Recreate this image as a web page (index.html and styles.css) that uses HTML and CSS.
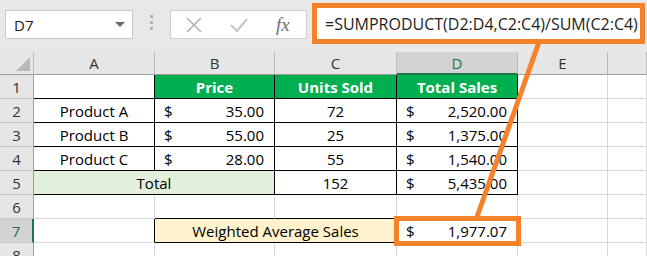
FILE: index.html
```html
<!DOCTYPE html>
<html>
<head>
<meta charset="utf-8">
<link rel="stylesheet" href="styles.css">
</head>
<body>
<div class="app">
  <div class="formula-bar">
    <div class="name-box">
      <span class="name-text">D7</span>
      <svg class="caret" width="10" height="6" viewBox="0 0 10 6"><polygon points="0,0 10,0 5,5" fill="#6b6b6b"/></svg>
    </div>
    <div class="grip"><span></span><span></span><span></span></div>
    <div class="fx-box">
      <svg class="icon-x" width="18" height="18" viewBox="0 0 18 18"><path d="M2 2 L16 16 M16 2 L2 16" stroke="#b3b3b3" stroke-width="1.6" fill="none"/></svg>
      <svg class="icon-check" width="20" height="16" viewBox="0 0 20 16"><path d="M2 8 L8 14 L18 2" stroke="#c4c4c4" stroke-width="2" fill="none"/></svg>
      <span class="fx">fx</span>
    </div>
    <div class="formula-input">=SUMPRODUCT(D2:D4,C2:C4)/SUM(C2:C4)</div>
  </div>

  <div class="grid">
    <div class="hd corner"><svg width="14" height="14" viewBox="0 0 14 14" class="corner-tri"><polygon points="14,0 14,14 0,14" fill="#b9b9b9"/></svg></div>
    <div class="hd col">A</div>
    <div class="hd col">B</div>
    <div class="hd col">C</div>
    <div class="hd col sel-col">D</div>
    <div class="hd col">E</div>
    <div class="hd col last"></div>

    <div class="hd row">1</div>
    <div class="c bk"></div>
    <div class="c bk green">Price</div>
    <div class="c bk green">Units Sold</div>
    <div class="c bk green">Total Sales</div>
    <div class="c"></div>
    <div class="c"></div>

    <div class="hd row">2</div>
    <div class="c bk center">Product A</div>
    <div class="c bk num"><span>$</span><span>35.00</span></div>
    <div class="c bk center">72</div>
    <div class="c bk num"><span>$</span><span>2,520.00</span></div>
    <div class="c"></div>
    <div class="c"></div>

    <div class="hd row">3</div>
    <div class="c bk center">Product B</div>
    <div class="c bk num"><span>$</span><span>55.00</span></div>
    <div class="c bk center">25</div>
    <div class="c bk num"><span>$</span><span>1,375.00</span></div>
    <div class="c"></div>
    <div class="c"></div>

    <div class="hd row">4</div>
    <div class="c bk center">Product C</div>
    <div class="c bk num"><span>$</span><span>28.00</span></div>
    <div class="c bk center">55</div>
    <div class="c bk num"><span>$</span><span>1,540.00</span></div>
    <div class="c"></div>
    <div class="c"></div>

    <div class="hd row">5</div>
    <div class="c bk center total span2">Total</div>
    <div class="c bk center">152</div>
    <div class="c bk num"><span>$</span><span>5,435.00</span></div>
    <div class="c"></div>
    <div class="c"></div>

    <div class="hd row">6</div>
    <div class="c"></div>
    <div class="c bb"></div>
    <div class="c bb"></div>
    <div class="c"></div>
    <div class="c"></div>
    <div class="c"></div>

    <div class="hd row sel-row">7</div>
    <div class="c br"></div>
    <div class="c bk center wavg span2">Weighted Average Sales</div>
    <div class="c num active"><span>$</span><span>1,977.07</span></div>
    <div class="c"></div>
    <div class="c"></div>

    <div class="hd row">8</div>
    <div class="c"></div>
    <div class="c"></div>
    <div class="c"></div>
    <div class="c"></div>
    <div class="c"></div>
    <div class="c"></div>
  </div>

  <svg class="callout" width="647" height="256" viewBox="0 0 647 256">
    <line x1="539" y1="42" x2="477" y2="217" stroke="#f5822a" stroke-width="5"/>
  </svg>
</div>
</body>
</html>
```

FILE: styles.css
```css
* { box-sizing: border-box; }
html, body { margin: 0; padding: 0; }
body {
  width: 647px;
  height: 256px;
  overflow: hidden;
  background: #ffffff;
  font-family: "Open Sans", "Noto Sans", sans-serif;
}
.app {
  position: relative;
  width: 647px;
  height: 256px;
  overflow: hidden;
}

/* formula bar */
.formula-bar {
  display: flex;
  align-items: flex-start;
  height: 52px;
  background: #e8e8e8;
  padding-left: 5px;
}
.name-box {
  margin-top: 10px;
  width: 128px;
  height: 29px;
  background: #fff;
  border: 1px solid #c8c8c8;
  display: flex;
  align-items: center;
  justify-content: space-between;
  padding: 0 7px 0 8px;
  font-family: "Open Sans", "Noto Sans", sans-serif;
  font-size: 15px;
  color: #222;
}
.grip {
  width: 37px;
  display: flex;
  flex-direction: column;
  align-items: center;
  gap: 3px;
  margin-top: 15px;
}
.grip span {
  width: 3px;
  height: 3px;
  background: #b3b3b3;
}
.fx-box {
  margin-top: 10px;
  width: 137px;
  height: 29px;
  background: #fff;
  border: 1px solid #d0d0d0;
  display: flex;
  align-items: center;
  padding-left: 14px;
}
.icon-check { margin-left: 26px; }
.fx {
  margin-left: 27px;
  font-family: "Liberation Serif", "DejaVu Serif", serif;
  font-style: italic;
  font-size: 19px;
  color: #707070;
  line-height: 1;
}
.formula-input {
  margin-top: 3px;
  margin-left: 5px;
  width: 333px;
  height: 41px;
  background: #fff;
  border: 5px solid #f5822a;
  display: flex;
  align-items: center;
  padding-left: 8px;
  font-family: "Open Sans", "Noto Sans", sans-serif;
  font-size: 16px;
  color: #1e1e1e;
  white-space: nowrap;
  overflow: hidden;
}

/* grid */
.grid {
  display: grid;
  grid-template-columns: 34px 121px 120px 122px 121px 90px 39px;
  grid-template-rows: 23px repeat(8, 24px);
  font-size: 15px;
  color: #000;
}
.hd {
  background: #e6e6e6;
  color: #333;
  display: flex;
  align-items: center;
  justify-content: center;
  font-size: 15px;
}
.hd.col {
  border-right: 1px solid #bcbcbc;
  border-bottom: 1px solid #9e9e9e;
}
.hd.corner {
  border-right: 1px solid #bcbcbc;
  border-bottom: 1px solid #9e9e9e;
  position: relative;
  justify-content: flex-end;
  align-items: flex-end;
  padding: 0 3px 3px 0;
}
.hd.row {
  border-right: 1px solid #9e9e9e;
  border-bottom: 1px solid #c8c8c8;
}
.sel-col {
  background: #d3d3d3;
  color: #217346;
  border-bottom: 2px solid #217346 !important;
}
.sel-row {
  background: #d3d3d3;
  color: #217346;
  border-right: 2px solid #217346 !important;
}

.c {
  border-right: 1px solid #d8d8d8;
  border-bottom: 1px solid #d8d8d8;
  display: flex;
  align-items: center;
  white-space: nowrap;
  overflow: hidden;
}
.c.bk {
  border-right-color: #000;
  border-bottom-color: #000;
}
.c.bb { border-bottom-color: #000; }
.c.br { border-right-color: #000; }
.center { justify-content: center; }
.num {
  justify-content: space-between;
  padding: 0 10px 0 9px;
}
.green {
  background: #00b050;
  color: #fff;
  font-weight: 700;
  justify-content: center;
}
.span2 { grid-column: span 2; }
.total { background: #e2efda; }
.wavg { background: #fff2cc; }
.active {
  outline: 5px solid #f5822a;
  outline-offset: -2px;
  position: relative;
  z-index: 2;
}

.callout {
  position: absolute;
  left: 0;
  top: 0;
  pointer-events: none;
  z-index: 3;
}
```
